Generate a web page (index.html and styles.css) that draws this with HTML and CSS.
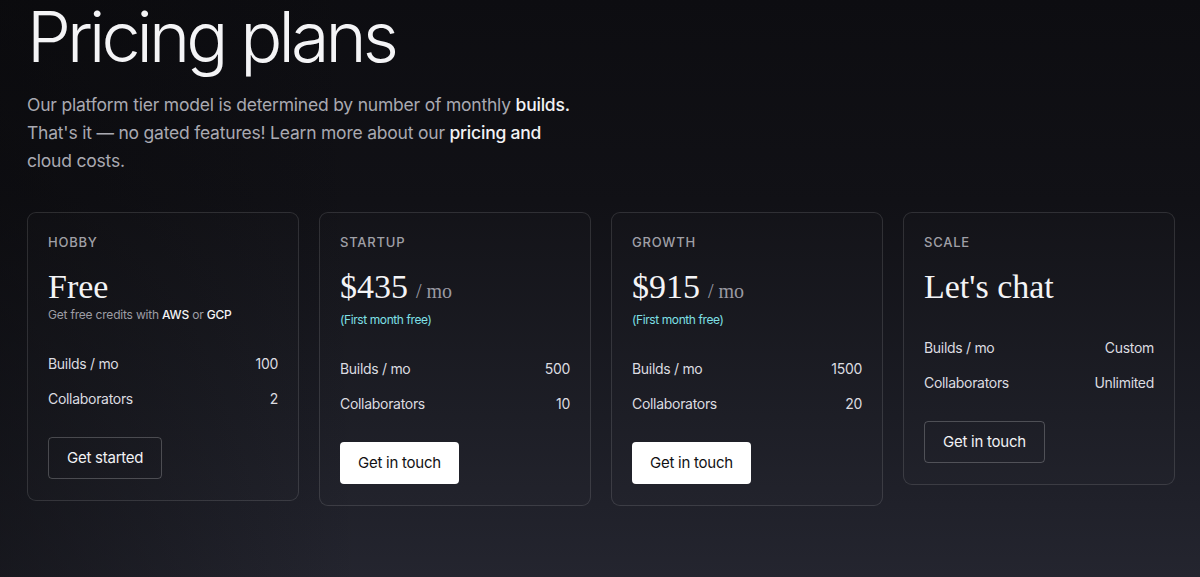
FILE: index.html
```html
<!DOCTYPE html>
<html>
<head>
<meta charset="utf-8">
<link rel="stylesheet" href="styles.css">
</head>
<body>
<main class="page">
  <h1 class="title">Pricing plans</h1>
  <p class="intro">Our platform tier model is determined by number of monthly <strong>builds.</strong><br>That's it — no gated features! Learn more about our <strong>pricing and</strong><br>cloud costs.</p>
  <section class="plans">
    <article class="card">
      <div class="tier">HOBBY</div>
      <div class="price">Free</div>
      <div class="note">Get free credits with <b>AWS</b> or <b>GCP</b></div>
      <div class="rows">
        <div class="row"><span>Builds / mo</span><span>100</span></div>
        <div class="row"><span>Collaborators</span><span>2</span></div>
      </div>
      <a class="btn btn-outline">Get started</a>
    </article>
    <article class="card">
      <div class="tier">STARTUP</div>
      <div class="price">$435<span class="per">/ mo</span></div>
      <div class="promo">(First month free)</div>
      <div class="rows">
        <div class="row"><span>Builds / mo</span><span>500</span></div>
        <div class="row"><span>Collaborators</span><span>10</span></div>
      </div>
      <a class="btn btn-solid">Get in touch</a>
    </article>
    <article class="card">
      <div class="tier">GROWTH</div>
      <div class="price">$915<span class="per">/ mo</span></div>
      <div class="promo">(First month free)</div>
      <div class="rows">
        <div class="row"><span>Builds / mo</span><span>1500</span></div>
        <div class="row"><span>Collaborators</span><span>20</span></div>
      </div>
      <a class="btn btn-solid">Get in touch</a>
    </article>
    <article class="card">
      <div class="tier">SCALE</div>
      <div class="price">Let's chat</div>
      <div class="rows">
        <div class="row"><span>Builds / mo</span><span>Custom</span></div>
        <div class="row"><span>Collaborators</span><span>Unlimited</span></div>
      </div>
      <a class="btn btn-outline">Get in touch</a>
    </article>
  </section>
</main>
</body>
</html>
```
FILE: styles.css
```css
html, body {
  margin: 0;
  height: 100%;
}
body {
  font-family: Inter, "Liberation Sans", sans-serif;
  color: #e8e8ec;
  background:
    linear-gradient(90deg, rgba(8,8,10,0.45) 0%, rgba(8,8,10,0) 30%),
    linear-gradient(180deg, #0d0d11 0%, #111116 35%, #1b1c24 72%, #24252f 100%);
  overflow: hidden;
}
.page {
  padding: 2px 27px 0 27px;
}
.title {
  margin: 0;
  font-size: 70px;
  line-height: 70px;
  font-weight: 300;
  letter-spacing: -0.056em;
  color: #f4f4f6;
}
.intro {
  margin: 19px 0 0 0;
  font-size: 17.5px;
  line-height: 28px;
  color: #a9a9b1;
  letter-spacing: -0.012em;
}
.intro strong {
  color: #f2f2f4;
  font-weight: 500;
}
.plans {
  margin-top: 37px;
  display: grid;
  grid-template-columns: repeat(4, 272px);
  column-gap: 20px;
  align-items: start;
}
.card {
  border: 1px solid rgba(255,255,255,0.12);
  border-radius: 9px;
  background: rgba(255,255,255,0.012);
  padding: 19px 20px 21px 20px;
  display: flex;
  flex-direction: column;
  align-items: flex-start;
}
.tier {
  font-size: 13px;
  line-height: 20px;
  letter-spacing: 0.06em;
  color: #a0a0a7;
  font-weight: 500;
}
.price {
  margin-top: 15px;
  font-family: "Liberation Serif", "DejaVu Serif", serif;
  font-size: 34px;
  line-height: 40px;
  color: #f4f4f6;
}
.per {
  font-size: 20px;
  line-height: 1;
  color: #9a9aa2;
  margin-left: 8px;
}
.note {
  margin-top: 0;
  font-size: 12px;
  line-height: 16px;
  letter-spacing: -0.2px;
  color: #9d9da5;
}
.note b {
  color: #f4f4f6;
  font-weight: 500;
}
.promo {
  margin-top: 5px;
  font-size: 12px;
  line-height: 16px;
  letter-spacing: -0.4px;
  color: #7fe0e6;
}
.rows {
  margin-top: 23px;
  align-self: stretch;
}
.row {
  display: flex;
  justify-content: space-between;
  height: 35px;
  line-height: 35px;
  font-size: 14px;
  letter-spacing: -0.3px;
  color: #dcdce0;
}
.btn {
  margin-top: 21px;
  display: inline-block;
  height: 42px;
  line-height: 42px;
  padding: 0 18px;
  font-size: 15px;
  letter-spacing: -0.25px;
  border-radius: 4px;
  box-sizing: border-box;
}
.btn-outline {
  border: 1px solid rgba(255,255,255,0.22);
  line-height: 40px;
  color: #f2f2f4;
}
.btn-solid {
  background: #ffffff;
  color: #111114;
}
```
